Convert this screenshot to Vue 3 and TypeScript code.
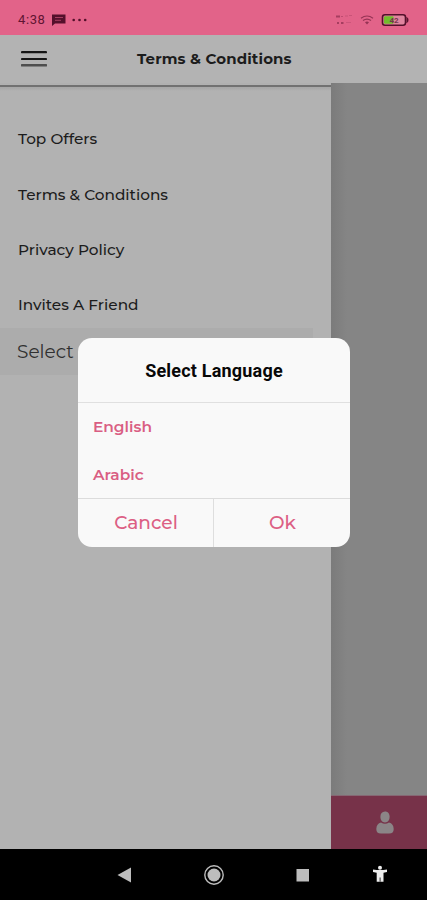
<script setup lang="ts">
interface MenuItem {
  id: string
  label: string
}

const menu: MenuItem[] = [
  { id: 'offers', label: 'Top Offers' },
  { id: 'terms', label: 'Terms & Conditions' },
  { id: 'privacy', label: 'Privacy Policy' },
  { id: 'invite', label: 'Invites A Friend' },
]

const languages: MenuItem[] = [
  { id: 'english', label: 'English' },
  { id: 'arabic', label: 'Arabic' },
]
</script>

<template>
  <div class="phone">
    <div class="status">
      <span class="clock">4:38</span>
      <svg class="chat" viewBox="0 0 14 12" width="14" height="12">
        <path d="M0 .5h13.500v9H3L0 12z" fill="#54102b" />
        <path d="M3 3.500h8M3 6.300h6" stroke="#a63e60" stroke-width="1" />
      </svg>
      <svg class="dots" viewBox="0 0 15 4" width="15" height="4" fill="#54102b">
        <circle cx="1.700" cy="2" r="1.300" /><circle cx="7.500" cy="2" r="1.300" /><circle cx="13.200" cy="2" r="1.300" />
      </svg>
      <svg class="signals" viewBox="0 0 92 16" width="92" height="16">
        <g fill="#a63e60">
          <rect x="1" y="3.500" width="4" height="2" /><rect x="6" y="4" width="2" height="1" opacity=".6" />
          <rect x="10" y="3.500" width="3" height="1" opacity=".4" /><rect x="14" y="3" width="3" height="1" opacity=".4" />
          <rect x="2" y="10" width="2" height="2" /><rect x="6" y="10" width="2.500" height="2" />
          <rect x="11" y="10" width="5" height="1" opacity=".35" />
        </g>
        <g fill="none" stroke="#953354" stroke-width="1.200">
          <path d="M26 6.200q6-4.400 12 0M28 8.600q4-2.800 8 0" />
          <path d="M30 10.300q2-1.400 4 0L32 12.500z" fill="#953354" stroke="none" />
        </g>
        <rect x="47.500" y="2.700" width="23" height="10.600" rx="2.500" fill="#e0859f" stroke="#54102b" stroke-width="1.600" />
        <path d="M71.500 5.500q1.500 0 1.500 2.500t-1.500 2.500" fill="#54102b" stroke="#54102b" />
        <rect x="49" y="4.200" width="9.500" height="7.600" rx="1" fill="#72bd2c" />
        <text x="59" y="10.800" text-anchor="middle" class="charge">42</text>
      </svg>
    </div>

    <header class="bar">
      <svg class="burger" viewBox="0 0 26 18" width="26" height="18">
        <path d="M1 2.200h24M1 9h24" stroke="#161616" stroke-width="2.200" stroke-linecap="round" />
        <path d="M1 15.200h24" stroke="#4e4e4e" stroke-width="2.600" stroke-linecap="round" />
      </svg>
      <h1 class="title">Terms &amp; Conditions</h1>
    </header>

    <main class="body">
      <nav class="drawer">
        <a v-for="item in menu" :key="item.id" class="link">{{ item.label }}</a>
        <div class="picker"><span>Select</span></div>
      </nav>
      <section class="page">
        <div class="tab">
          <svg viewBox="0 0 18 24" width="18" height="24" fill="#8b8587">
            <path d="M9 .5c3 0 4.600 2.200 4.600 5.300S12 11.500 9 11.500 4.400 9 4.400 5.800 6 .5 9 .5z" />
            <path d="M5 11.500q4 2.400 8 0 4.500 1 4.700 6.500 0 4.500-4.500 4.500H4.800Q.3 22.500.3 18 .5 12.500 5 11.500z" />
          </svg>
        </div>
      </section>
    </main>

    <footer class="system">
      <svg viewBox="0 0 427 50" width="427" height="50">
        <path d="M117.500 25l13.500-7.500v15z" fill="#bdbdbd" />
        <circle cx="214" cy="25" r="9.200" fill="none" stroke="#bdbdbd" stroke-width="1.400" />
        <circle cx="214" cy="25" r="6.500" fill="#bdbdbd" />
        <rect x="296.500" y="19" width="12.500" height="12.500" fill="#bdbdbd" />
        <g fill="#ededed">
          <circle cx="380" cy="17.700" r="2" />
          <path d="M373 19.500q7 1 14 0v2.500l-3.500.8v9h-6.800v-9l-3.700-.8z" />
          <path d="M379.600 27.500h1v4.300h-1z" fill="#333" />
        </g>
      </svg>
    </footer>

    <div class="overlay">
      <div class="dialog" role="dialog">
        <h2 class="heading">Select Language</h2>
        <div class="choices">
          <div v-for="lang in languages" :key="lang.id" class="choice">{{ lang.label }}</div>
        </div>
        <div class="actions">
          <button class="action cancel">Cancel</button>
          <button class="action ok">Ok</button>
        </div>
      </div>
    </div>
  </div>
</template>

<style>
body {
  margin: 0;
}
</style>

<style scoped>
.phone {
  position: relative;
  display: flex;
  flex-direction: column;
  width: 427px;
  height: 900px;
  overflow: hidden;
  background: #b1b1b1;
  font-family: Montserrat, Inter, sans-serif;
  color: #1c1c1c;
}
.status {
  display: flex;
  align-items: center;
  flex: none;
  box-sizing: border-box;
  height: 35px;
  padding: 4px 0 0 18px;
  background: #e26389;
}
.status svg {
  flex: none;
}
.clock {
  width: 34px;
  font: 400 13px/16px Roboto, sans-serif;
  letter-spacing: 0.6px;
  color: #5f1432;
}
.dots {
  margin-left: 6px;
}
.signals {
  margin-left: 248px;
}
.charge {
  font: 700 8px Roboto, sans-serif;
  fill: #76354c;
}
.bar {
  display: flex;
  align-items: center;
  flex: none;
  height: 48px;
  padding-left: 21px;
  background: #b3b3b3;
}
.title {
  margin: 0 0 0 90px;
  font-size: 15px;
  font-weight: 700;
  line-height: 20px;
  letter-spacing: 0.13px;
  white-space: nowrap;
}
.body {
  display: flex;
  height: 766px;
  flex: none;
}
.drawer {
  box-sizing: border-box;
  width: 331px;
  padding-top: 27px;
  border-top: 1px solid #b0b0b0;
  background: linear-gradient(#717171 0 2px, #a8a8a8 2px 3px, #b2b2b2 6px);
  background-position: 0 1px;
  background-repeat: no-repeat;
}
.link {
  display: flex;
  align-items: center;
  height: 55.4px;
  padding-left: 18px;
  font-size: 15.3px;
  font-weight: 500;
  white-space: nowrap;
}
.picker {
  display: flex;
  align-items: center;
  box-sizing: border-box;
  width: 313px;
  height: 47px;
  margin-top: -4.6px;
  padding: 1px 0 0 17px;
  background: #acacac;
  font-size: 18.5px;
  color: #303030;
}
.page {
  display: flex;
  flex: 1;
  flex-direction: column;
  justify-content: flex-end;
  background: linear-gradient(90deg, #7b7b7b, #858585 16px);
}
.tab {
  box-sizing: border-box;
  height: 54px;
  padding: 15px 0 0 45px;
  border-top: 1px solid #866773;
  background: #773249;
}
.system {
  flex: none;
  height: 51px;
  background: #000;
}
.system svg {
  display: block;
  padding-top: 1px;
}
.overlay {
  position: absolute;
  inset: 0;
  box-sizing: border-box;
  padding: 338px 0 0 78px;
}
.dialog {
  width: 272px;
  height: 209px;
  overflow: hidden;
  border-radius: 14px;
  background: #f9f9f9;
}
.heading {
  box-sizing: border-box;
  height: 65px;
  margin: 0;
  border-bottom: 1px solid #e0e0e0;
  font: 700 18px/65px Roboto, sans-serif;
  letter-spacing: 0.2px;
  text-align: center;
  color: #080808;
}
.choices {
  height: 95px;
}
.choice {
  height: 48px;
  padding-left: 15px;
  font-size: 15.4px;
  font-weight: 650;
  line-height: 47px;
  color: #d95e83;
}
.actions {
  display: grid;
  grid-template-columns: 136px 136px;
  height: 49px;
  border-top: 1px solid #dcdcdc;
  box-sizing: border-box;
}
.action {
  margin: 0;
  padding: 0 0 1px 1px;
  border: 0;
  background: none;
  font: 500 18.5px Montserrat, Inter, sans-serif;
  color: #dc5f84;
}
.cancel {
  border-right: 1px solid #dedede;
}
</style>
